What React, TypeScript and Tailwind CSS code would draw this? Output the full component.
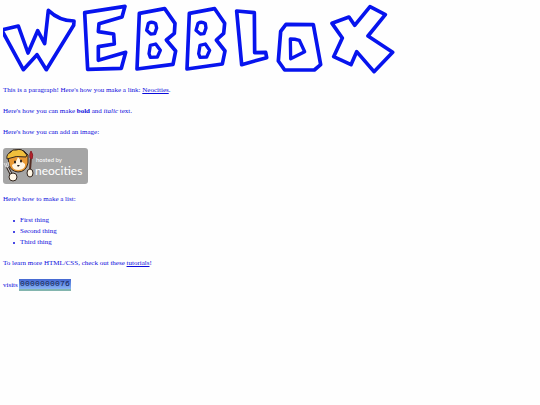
const letters = [
  'M5 88 L55 76 L84 157 L113 90 L134 129 L145 29 C168 51 193 61 222 61 L221 74 L139 207 L111 162 L70 207 Z',
  'M254 36 L375 17 L366 49 L297 69 L295 93 L341 100 L343 130 L295 138 L295 179 L377 155 L364 203 L263 206 Z',
  'M418 38 L494 24 L525 68 L523 98 L499 118 L527 151 L519 191 L411 205 Z',
  'M568 38 L644 24 L674 68 L671 98 L649 118 L675 151 L667 190 L561 205 Z',
  'M710 31 L763 36 L764 156 L797 155 L800 171 L725 192 Z',
  'M858 71 L940 72 L962 192 L943 208 L854 208 L835 181 L842 92 Z',
  'M996 68 L1047 49 L1064 74 L1110 18 L1156 42 L1104 106 L1178 155 L1122 213 L1070 153 L1053 192 L1001 168 L1027 112 Z',
];

const holes = [
  'M445 68 Q456 61 467 69 L470 82 L464 99 L452 100 L440 89 Z',
  'M451 134 L467 130 L481 149 L472 169 L451 170 L447 159 Z',
  'M594 68 Q605 61 616 69 L618 82 L612 99 L601 100 L588 89 Z',
  'M600 134 L616 130 L629 149 L620 169 L600 170 L596 159 Z',
  'M871 115 Q885 115 898 119 L914 153 L872 174 Z',
];

function Logo() {
  return (
    <svg className="block h-[72px] w-[392px]" viewBox="9 7 1176 216" role="img" aria-label="Webblox" fill="none" stroke="#0714ee" strokeLinejoin="round">
      <g strokeWidth="11">
        {letters.map((d) => <path key={d} d={d} />)}
      </g>
      <g strokeWidth="10">
        {holes.map((d) => <path key={d} d={d} />)}
      </g>
    </svg>
  );
}

function Badge() {
  return (
    <svg className="block h-9 w-[85px]" viewBox="0 0 85 36" role="img" aria-label="Hosted by Neocities">
      <rect width="85" height="36" rx="3" fill="#a5a5a5" />
      <g stroke="#33261e" strokeWidth="1" strokeLinejoin="round">
        <path d="M5 9 L7 4 Q13 0 21 3 L25 7 L25 15 Q23 24 15 24 Q7 23 6 16 Z" fill="#e99a36" />
        <path d="M9 17 Q13 15 15 9 Q18 14 22 16 Q23 21 16 22 Q9 22 9 17 Z" fill="#fff5e4" stroke="none" />
        <path d="M4 11 Q3 6 8 4 Q9 1 13 2 Q19 0 22 5 Q25 7 23 9 Q13 7 4 11 Z" fill="#f0bf3c" />
        <path d="M27 22 L28 9" stroke="#542d23" strokeWidth="2" />
        <path d="M27 10 Q26 6 28 3 Q31 7 29 11 Z" fill="#b7212b" stroke="#8d1f27" />
        <path d="M8 26 L4 18" strokeWidth="3" />
        <path d="M8 26 L4 18 M1 15 L3 19 L6 18 L5 14 M3 15 L4 18" fill="none" stroke="#dddddd" />
        <ellipse cx="10" cy="29" rx="4" ry="4" fill="#fff6e6" />
        <ellipse cx="27" cy="25" rx="3" ry="4" fill="#fff6e6" />
      </g>
      <g fill="#231b18">
        <ellipse cx="12" cy="14" rx="1" ry="1.5" />
        <ellipse cx="18" cy="13" rx="1" ry="1.5" />
        <path d="M14 17 L17 17 L15 19 Z" />
      </g>
      <g fill="#ffffff" className="font-[Lato,sans-serif]">
        <text x="33" y="14" className="text-[6px]">hosted by</text>
        <text x="32" y="27" className="text-[12px]">neocities</text>
      </g>
    </svg>
  );
}

function Counter({ value }: { value: string }) {
  return (
    <span className="flex h-3 border-b-2 border-[#83b5ae] bg-linear-to-b from-[#4466d0] to-[#8ab4f4] px-px font-['Liberation_Mono',monospace] text-[8px] leading-[10px] text-[#101b50]">
      {value.split('').map((digit, i) => (
        <span key={i} className="w-[5px] text-center">{digit}</span>
      ))}
    </span>
  );
}

const things = ['First thing', 'Second thing', 'Third thing'];

export default function App() {
  return (
    <main className="flex min-h-screen flex-col gap-[10px] bg-[#fefefe] px-[3px] pt-[3px] font-['Liberation_Serif',serif] text-[7px] leading-[11px] text-[#0b0bdc]">
      <h1><Logo /></h1>
      <p>This is a paragraph! Here's how you make a link: <a href="#neocities" className="underline">Neocities</a>.</p>
      <p>Here's how you can make <strong>bold</strong> and <em>italic</em> text.</p>
      <p>Here's how you can add an image:</p>
      <Badge />
      <p>Here's how to make a list:</p>
      <ul className="pl-[10px]">
        {things.map((thing) => (
          <li key={thing} className="flex items-center gap-[5px] before:size-[2px] before:rounded-full before:bg-[#0b0bdc]">{thing}</li>
        ))}
      </ul>
      <p>To learn more HTML/CSS, check out these <a href="#tutorials" className="underline">tutorials</a>!</p>
      <div className="flex items-end gap-px">
        <span>visits</span>
        <Counter value="0000000076" />
      </div>
    </main>
  );
}
